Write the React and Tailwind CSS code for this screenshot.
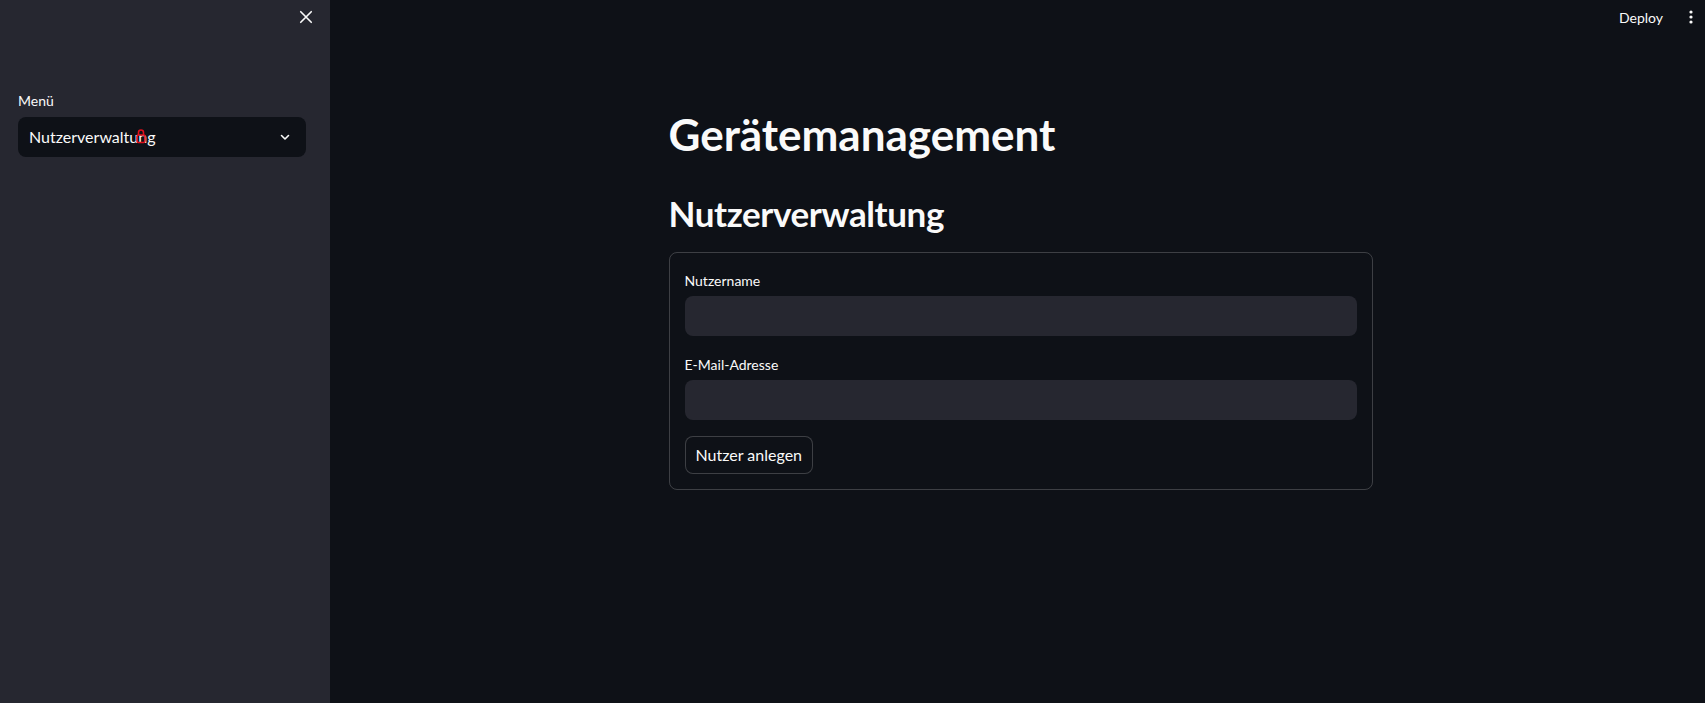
import React from "react";

const font = { fontFamily: "Lato, 'Noto Sans', sans-serif" };

const CloseIcon = () => (
  <svg width="18" height="18" viewBox="0 0 24 24" fill="none" stroke="#fafafa" strokeWidth="2.2" strokeLinecap="round">
    <path d="M5 5l14 14M19 5L5 19" />
  </svg>
);

const Chevron = () => (
  <svg width="12" height="12" viewBox="0 0 24 24" fill="none" stroke="#fafafa" strokeWidth="3.2" strokeLinecap="round" strokeLinejoin="round">
    <path d="M5 9l7 7 7-7" />
  </svg>
);

const Lock = () => (
  <svg width="10" height="16" viewBox="0 0 10 16" fill="none" stroke="#e0101c" strokeWidth="1.6">
    <path d="M2.5 7V4.5a2.5 2.5 0 015 0V7" />
    <rect x="1" y="7" width="8" height="7.5" rx="1.5" />
  </svg>
);

const Field = ({ label }) => (
  <div className="flex flex-col">
    <label className="h-6 flex items-center text-[14px] text-[#fafafa] mb-1">{label}</label>
    <input className="h-10 w-full rounded-lg bg-[#262730] px-3 text-[16px] text-[#fafafa] outline-none" />
  </div>
);

export default function App() {
  return (
    <div className="flex h-[703px] w-full overflow-hidden bg-[#0e1117]" style={font}>
      <aside className="w-[330px] shrink-0 bg-[#262730] flex flex-col">
        <div className="flex justify-end pr-[15px] pt-[8px] h-[88px]">
          <button className="h-[18px] w-[18px] flex items-center justify-center">
            <CloseIcon />
          </button>
        </div>
        <div className="pl-[18px] pr-[24px]">
          <div className="h-6 flex items-center text-[14px] text-[#fafafa] mb-[5px]">Menü</div>
          <div className="relative h-10 rounded-lg bg-[#0e1117] flex items-center justify-between pl-[11px] pr-[15px]">
            <span className="text-[16px] text-[#fafafa]">Nutzerverwaltung</span>
            <Chevron />
            <span className="absolute left-[118px] top-[11px]">
              <Lock />
            </span>
          </div>
        </div>
      </aside>

      <main className="flex-1 flex flex-col">
        <header className="h-[34px] flex items-center justify-end gap-[26px] pr-[12px]">
          <span className="text-[14px] text-[#fafafa]">Deploy</span>
          <svg width="4" height="14" viewBox="0 0 4 14" fill="#fafafa">
            <circle cx="2" cy="2" r="1.6" />
            <circle cx="2" cy="7" r="1.6" />
            <circle cx="2" cy="12" r="1.6" />
          </svg>
        </header>
        <div className="flex justify-center pl-[6px]">
          <div className="w-[704px] flex flex-col">
            <h1 className="mt-[72px] text-[44px] font-bold leading-[56px] text-[#fafafa]">Gerätemanagement</h1>
            <h2 className="mt-[28px] text-[35px] font-bold tracking-[-0.4px] leading-[46px] text-[#fafafa]">Nutzerverwaltung</h2>
            <form className="mt-[16px] rounded-lg border border-[#fafafa]/20 p-[15px] flex flex-col gap-4">
              <Field label="Nutzername" />
              <Field label="E-Mail-Adresse" />
              <div>
                <button type="button" className="h-[38px] px-[10px] rounded-lg border border-[#fafafa]/20 text-[16px] text-[#fafafa] bg-[#0e1117]">
                  Nutzer anlegen
                </button>
              </div>
            </form>
          </div>
        </div>
      </main>
    </div>
  );
}
